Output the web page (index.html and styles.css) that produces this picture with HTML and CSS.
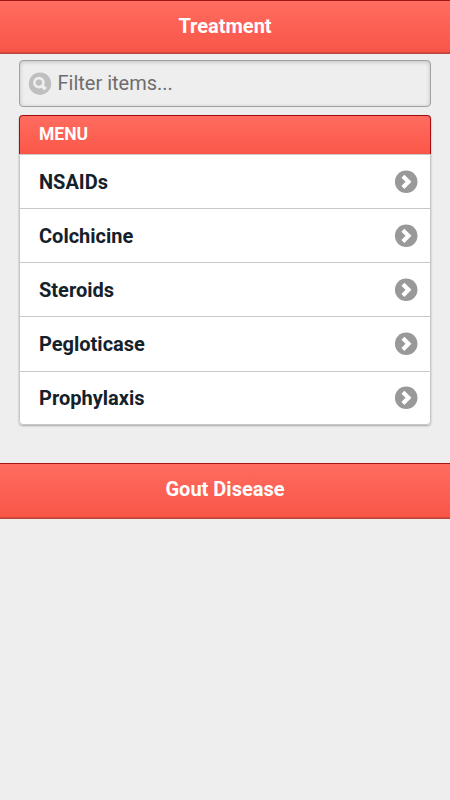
FILE: index.html
```html
<!DOCTYPE html>
<html lang="en">
<head>
<meta charset="utf-8">
<title>Treatment</title>
<link rel="stylesheet" href="styles.css">
</head>
<body>
<svg width="0" height="0" class="defs" aria-hidden="true">
  <symbol id="arrow" viewBox="0 0 24 24">
    <circle cx="12.2" cy="11.8" r="11.3" fill="#999"/>
    <path d="M8.9 6.2 L14.5 11.8 L8.9 17.4" fill="none" stroke="#fff" stroke-width="4.2"/>
  </symbol>
</svg>
<header class="bar"><h1>Treatment</h1></header>
<main>
  <label class="search">
    <svg viewBox="0 0 24 24" class="icon"><circle cx="12" cy="11.7" r="11.2" fill="#bfbfbf"/><circle cx="10.9" cy="10.6" r="4.5" fill="none" stroke="#eee" stroke-width="2.7"/><path d="M13.8 13.5 L17.6 17.3" stroke="#eee" stroke-width="3.6"/></svg>
    <input type="text" placeholder="Filter items...">
  </label>
  <ul class="list">
    <li class="divider">MENU</li>
    <li class="item"><span>NSAIDs</span><svg class="icon"><use href="#arrow"/></svg></li>
    <li class="item"><span>Colchicine</span><svg class="icon"><use href="#arrow"/></svg></li>
    <li class="item"><span>Steroids</span><svg class="icon"><use href="#arrow"/></svg></li>
    <li class="item"><span>Pegloticase</span><svg class="icon"><use href="#arrow"/></svg></li>
    <li class="item"><span>Prophylaxis</span><svg class="icon"><use href="#arrow"/></svg></li>
  </ul>
</main>
<footer class="bar bar-footer"><h1>Gout Disease</h1></footer>
</body>
</html>
```
FILE: styles.css
```css
* { box-sizing: border-box; }
body {
  margin: 0;
  background: #eee;
  font-family: Roboto, sans-serif;
  color: #14212b;
}
.defs { display: none; }
.bar {
  height: 54px;
  border-top: 1px solid #a01712;
  border-bottom: 1px solid #b8483f;
  background: linear-gradient(#ff6c60, #f85647);
  box-shadow: inset 0 -1px #dc4639;
}
.bar h1 {
  margin: 0;
  font-size: 20px;
  line-height: 50px;
  font-weight: 700;
  text-align: center;
  color: #fff;
}
main { padding: 6px 19px 38px; }
.search {
  display: flex;
  align-items: center;
  gap: 5.5px;
  height: 47px;
  padding: 0 9px 0 8px;
  border: 1px solid #a1a1a1;
  border-radius: 4px;
  background: #eee;
  box-shadow: inset 0 1px 4px rgba(0, 0, 0, .2);
}
.icon { width: 24px; height: 24px; flex: none; }
.search input {
  flex: 1;
  min-width: 0;
  padding: 0 0 1px;
  border: 0;
  outline: 0;
  background: none;
  font: 20px Roboto, sans-serif;
}
.search input::placeholder { color: #6d6d6d; }
.list {
  margin: 8px 0 0;
  padding: 0;
  list-style: none;
  border-radius: 4px;
  box-shadow: 0 1px 2px rgba(0, 0, 0, .3);
}
.divider {
  height: 38.5px;
  padding-left: 19px;
  border: 1px solid #a30d11;
  border-bottom: 0;
  border-radius: 4px 4px 0 0;
  background: linear-gradient(#ff6c60, #fa5748);
  font-size: 17.5px;
  line-height: 37px;
  font-weight: 700;
  color: #fff;
}
.item {
  display: flex;
  align-items: center;
  justify-content: space-between;
  height: 54.25px;
  padding: 1.2px 12px 0 19px;
  border: 1px solid #c8c8c8;
  border-bottom: 0;
  background: #fff;
  font-size: 20px;
  font-weight: 700;
}
.item:last-child {
  border-bottom: 1px solid #c8c8c8;
  border-radius: 0 0 4px 4px;
}
.bar-footer { height: 56px; }
.bar-footer h1 { line-height: 51px; }
```
